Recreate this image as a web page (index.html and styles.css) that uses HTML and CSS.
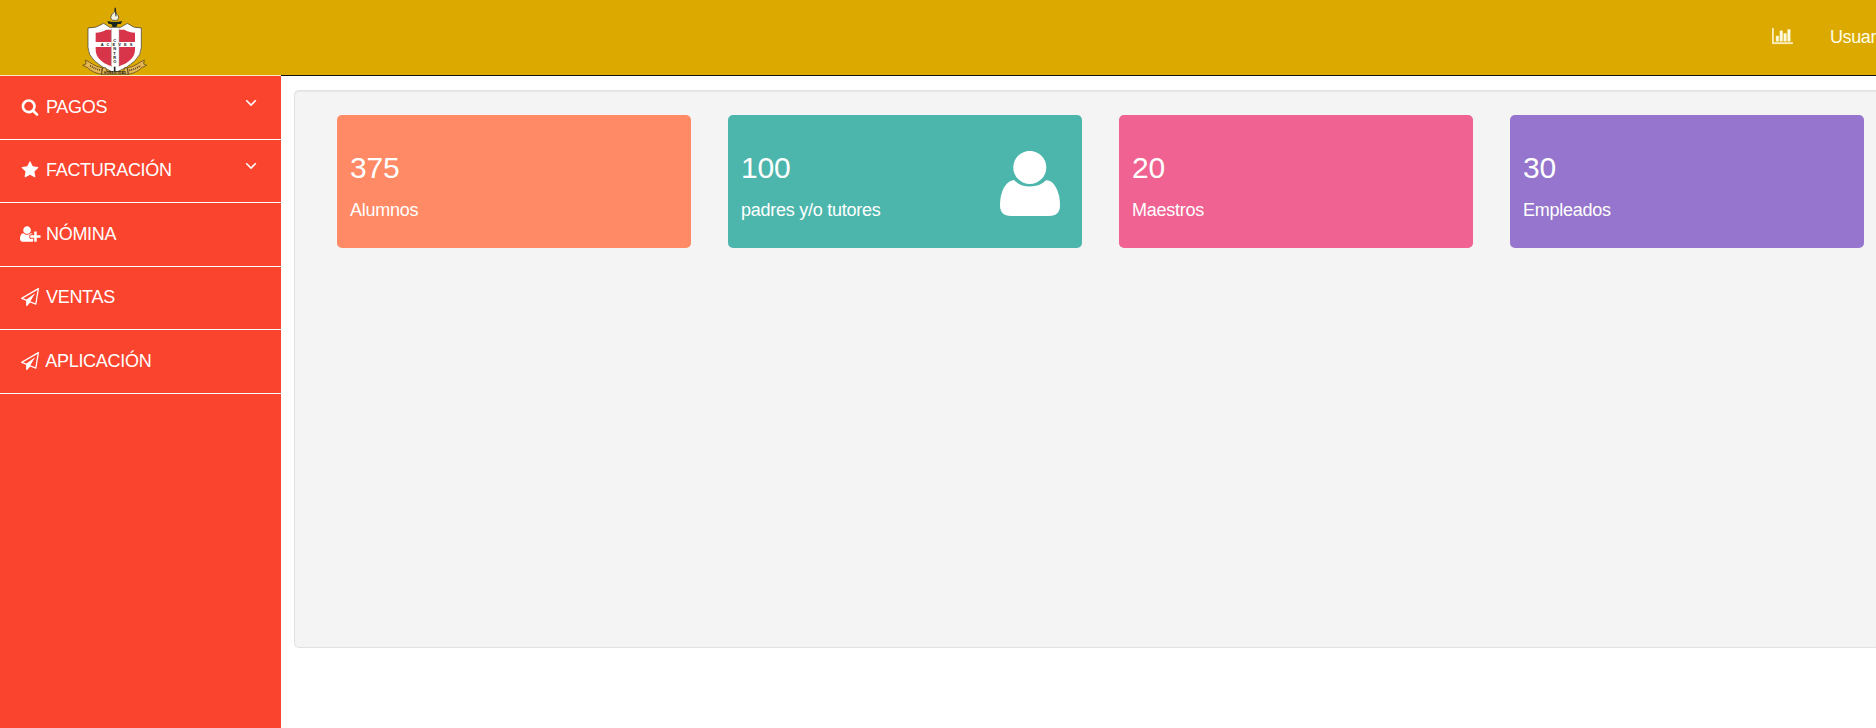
FILE: index.html
```html
<!DOCTYPE html>
<html lang="es">
<head>
<meta charset="utf-8">
<title>Panel</title>
<link rel="stylesheet" href="styles.css">
</head>
<body>
<header class="topbar">
  <svg class="logo" viewBox="0 0 270 225">
    <path d="M134 26l4 14q9 6 8 13l-4 8h-15l-5-8q1-11 12-17z" fill="#f4f0dc" stroke="#333" stroke-width="2"/>
    <path d="M136 23l2 26" stroke="#222" stroke-width="3"/>
    <path d="M112 63q22 6 45 0l-5 9h-9l-4 9h-11l-4-9h-8z" fill="#17251c"/>
    <path d="M54 84q24 2 47-14l18 12h33l20-12q19 16 42 14v58q0 44-80 77q-80-33-80-77z" fill="#fff" stroke="#333" stroke-width="2"/>
    <path d="M77 98q20-1 31-9h16v37H77zM147 89h17q11 8 31 9v28h-48zM77 141h47v58q-47-18-47-50zM147 141h48v8q0 32-48 50z" fill="#d8344a"/>
    <path d="M124 84v117M147 84v117" stroke="#999" stroke-width="1.500"/>
    <path d="M134 200v22" stroke="#222" stroke-width="5"/>
    <path d="M46 180l13 7 8 5q10 7 30 12l-2 19q-30-6-42-20l-15-7 10-4zM97 204l10-1 4 12h50l3-12 8 1 3 19h-80zM172 204q20-5 30-12l8-5 13-7-2 12 9 4-15 7q-12 14-40 20z" fill="#e6b754" stroke="#4a3a18" stroke-width="2"/>
    <g class="logo-text">
      <text x="92" y="138" textLength="95">ACEVES</text>
      <text x="130" y="125">C</text><text x="130" y="151">N</text><text x="130" y="164">T</text><text x="130" y="177">R</text><text x="130" y="190">O</text>
      <text class="motto" x="102" y="222" textLength="66">HONESTIDAD</text>
    </g>
    <path d="M60 197q16 10 34 14M178 211q18-4 34-14" fill="none" stroke="#4a3a18" stroke-width="5" stroke-dasharray="3 3"/>
  </svg>
  <nav class="tools">
    <svg class="chart" viewBox="0 0 2048 1792"><path d="M640 896v512h-256v-512h256zm384-512v1024h-256v-1024h256zm1024 1152v128h-2048v-1536h128v1408h1920zm-640-896v768h-256v-768h256zm384-384v1152h-256v-1152h256z"/></svg>
    <span class="user">Usuar</span>
  </nav>
</header>
<div class="layout">
  <aside class="sidebar">
    <a class="item pagos"><span class="ico"><svg viewBox="0 0 1792 1792"><path d="M1216 832q0-185-131.5-316.5t-316.5-131.5-316.5 131.5-131.5 316.5 131.5 316.5 316.5 131.5 316.5-131.5 131.5-316.5zm512 832q0 52-38 90t-90 38q-54 0-90-38l-343-342q-179 124-399 124-143 0-273.5-55.5t-225-150-150-225-55.5-273.5 55.5-273.5 150-225 225-150 273.5-55.5 273.5 55.5 225 150 150 225 55.5 273.5q0 220-124 399l343 343q37 37 37 90z"/></svg></span><span class="name">PAGOS</span><svg class="chev" viewBox="0 0 12 8"><path d="M1.2 1.2L6 6l4.8-4.8"/></svg></a>
    <a class="item facturacion"><span class="ico"><svg viewBox="0 0 1792 1792"><path d="M1728 647q0 22-26 48l-363 354 86 500q1 7 1 20 0 21-10.5 35.5t-30.5 14.5q-19 0-40-12l-449-236-449 236q-22 12-40 12-21 0-31.5-14.5t-10.5-35.5q0-6 2-20l86-500-364-354q-25-27-25-48 0-37 56-46l502-73 225-455q19-41 49-41t49 41l225 455 502 73q56 9 56 46z"/></svg></span><span class="name">FACTURACIÓN</span><svg class="chev" viewBox="0 0 12 8"><path d="M1.2 1.2L6 6l4.8-4.8"/></svg></a>
    <a class="item nomina"><span class="ico"><svg class="wide" viewBox="0 0 2048 1792"><path d="M704 896q-159 0-271.5-112.5t-112.5-271.5 112.5-271.5 271.5-112.5 271.5 112.5 112.5 271.5-112.5 271.5-271.5 112.5zm960 128h352q13 0 22.5 9.5t9.5 22.5v192q0 13-9.5 22.5t-22.5 9.5h-352v352q0 13-9.5 22.5t-22.5 9.5h-192q-13 0-22.5-9.5t-9.5-22.5v-352h-352q-13 0-22.5-9.5t-9.5-22.5v-192q0-13 9.5-22.5t22.5-9.5h352v-352q0-13 9.5-22.5t22.5-9.5h192q13 0 22.5 9.5t9.5 22.5v352zm-736 224q0 52 38 90t90 38h256v238q-68 50-171 50h-874q-121 0-194-69t-73-190q0-53 3.5-103.5t14-109 26.5-108.5 43-97.5 62-81 85.5-53.5 111.5-20q19 0 39 17 79 61 154.5 91.5t164.5 30.5 164.5-30.5 154.5-91.5q20-17 39-17 132 0 217 96h-223q-52 0-90 38t-38 90v192z"/></svg></span><span class="name">NÓMINA</span></a>
    <a class="item ventas"><span class="ico"><svg viewBox="0 0 1792 1792"><path d="M1764 11q33 24 27 64l-256 1536q-5 29-32 45-14 8-31 8-11 0-24-5l-527-215-298 327q-18 21-47 21-14 0-23-4-19-7-30-23.5t-11-36.5v-452l-472-193q-37-14-40-55-3-39 32-59l1664-960q35-21 68 2zm-342 1499l221-1323-1434 827 336 137 863-639-478 797z"/></svg></span><span class="name">VENTAS</span></a>
    <a class="item aplicacion"><span class="ico"><svg viewBox="0 0 1792 1792"><path d="M1764 11q33 24 27 64l-256 1536q-5 29-32 45-14 8-31 8-11 0-24-5l-527-215-298 327q-18 21-47 21-14 0-23-4-19-7-30-23.5t-11-36.5v-452l-472-193q-37-14-40-55-3-39 32-59l1664-960q35-21 68 2zm-342 1499l221-1323-1434 827 336 137 863-639-478 797z"/></svg></span><span class="name">APLICACIÓN</span></a>
  </aside>
  <main class="content">
    <section class="panel">
      <article class="card orange"><div class="num">375</div><div class="label">Alumnos</div></article>
      <article class="card teal">
        <div><div class="num">100</div><div class="label">padres y/o tutores</div></div>
        <svg class="person" viewBox="0 0 60 65"><circle cx="29.8" cy="16.4" r="16.5"/><path d="M14 29Q20 35.500 30 35.500T46 29.300Q52 29 56 36.500Q60 44 60 54Q60 65 49 65H11Q0 65 0 54Q0 44 4 36.500Q8 29.500 14 29z"/></svg>
      </article>
      <article class="card pink"><div class="num">20</div><div class="label">Maestros</div></article>
      <article class="card purple"><div class="num">30</div><div class="label">Empleados</div></article>
    </section>
  </main>
</div>
</body>
</html>
```

FILE: styles.css
```css
* { box-sizing: border-box; }
body {
  margin: 0;
  height: 728px;
  overflow: hidden;
  background: #fff;
  color: #fff;
  font: 18px/26px "Liberation Sans", Arial, sans-serif;
}
svg { display: block; fill: #fff; }
.topbar {
  height: 76px;
  display: flex;
  justify-content: space-between;
  background: #dba900;
  border-bottom: 1px solid #111;
  padding-left: 70px;
}
.logo { width: 90px; height: 75px; }
.logo-text { font-size: 12px; font-weight: bold; fill: #111; }
.logo-text .motto { font-size: 9px; }
.tools {
  display: flex;
  width: 104px;
  padding-top: 24px;
  overflow: hidden;
}
.chart { width: 21px; height: 18px; margin-top: 3px; flex: none; fill: #fffbe0; stroke: #fffbe0; stroke-width: 40; }
.user { margin-left: 37px; letter-spacing: -0.4px; color: #fffde8; }
.layout { display: flex; height: 652px; }
.sidebar {
  width: 281px;
  flex: none;
  margin-top: -1px;
  background: #fb442e;
  border-top: 1px solid #fbe9c0;
}
.item {
  display: flex;
  height: 64px;
  padding: 18px 23px 0 19px;
  border-bottom: 1px solid #fff;
}
.facturacion, .ventas { height: 63px; padding-top: 17px; }
.ico { width: 23px; display: flex; justify-content: center; padding-top: 3.5px; }
.ico svg { width: 18px; height: 18px; flex: none; margin-right: 1.4px; }
.ico .wide { width: 20.6px; margin-right: 0; }
.name { margin-left: 4px; letter-spacing: -0.3px; }
.aplicacion .name { margin-left: 3.3px; }
.chev { width: 12px; height: 8px; margin: 5px 1px 0 auto; fill: none; stroke: #fff; stroke-width: 1.6; }
.content { flex: 1; min-width: 0; padding: 14px 0 0 13px; }
.panel {
  display: grid;
  grid-template-columns: repeat(4, 354px);
  column-gap: 37px;
  align-content: start;
  height: 558px;
  padding: 24px 0 0 42px;
  background: #f4f4f4;
  border: 1px solid #e2e2e2;
  border-right: 0;
  border-radius: 5px 0 0 5px;
  box-shadow: inset 0 1px 1px rgba(0, 0, 0, .05);
}
.card { height: 133px; padding: 35px 22px 0 13px; border-radius: 5px; }
.num { font-size: 30px; line-height: 36px; letter-spacing: -0.2px; }
.label { margin-top: 11px; letter-spacing: -0.25px; }
.orange { background: #ff8a65; }
.teal { background: #4db6ac; display: flex; justify-content: space-between; }
.pink { background: #f06292; }
.purple { background: #9575cd; }
.person { width: 60px; height: 65px; margin-top: 1px; }
```
